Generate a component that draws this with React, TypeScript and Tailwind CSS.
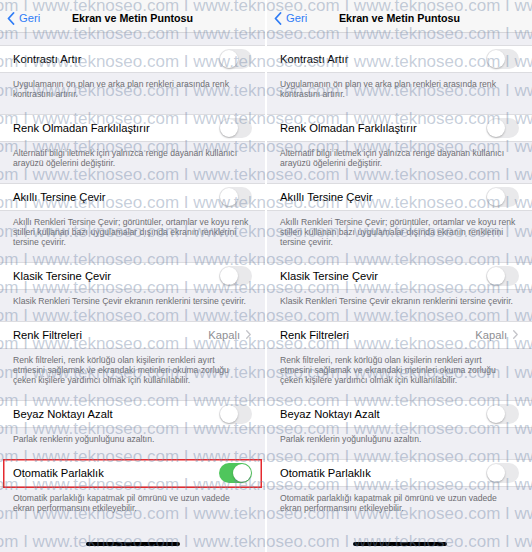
import React from "react";

type Item = {
    label: string;
    lines: string[];
    value?: string;
};

const items: Item[] = [
    {
        label: "Kontrastı Artır",
        lines: [
            "Uygulamanın ön plan ve arka plan renkleri arasında renk",
            "kontrastını artırır.",
        ],
    },
    {
        label: "Renk Olmadan Farklılaştırır",
        lines: [
            "Alternatif bilgi iletmek için yalnızca renge dayanan kullanıcı",
            "arayüzü öğelerini değiştirir.",
        ],
    },
    {
        label: "Akıllı Tersine Çevir",
        lines: [
            "Akıllı Renkleri Tersine Çevir; görüntüler, ortamlar ve koyu renk",
            "stilleri kullanan bazı uygulamalar dışında ekranın renklerini",
            "tersine çevirir.",
        ],
    },
    {
        label: "Klasik Tersine Çevir",
        lines: ["Klasik Renkleri Tersine Çevir ekranın renklerini tersine çevirir."],
    },
    {
        label: "Renk Filtreleri",
        value: "Kapalı",
        lines: [
            "Renk filtreleri, renk körlüğü olan kişilerin renkleri ayırt",
            "etmesini sağlamak ve ekrandaki metinleri okuma zorluğu",
            "çeken kişilere yardımcı olmak için kullanılabilir.",
        ],
    },
    {
        label: "Beyaz Noktayı Azalt",
        lines: ["Parlak renklerin yoğunluğunu azaltın."],
    },
    {
        label: "Otomatik Parlaklık",
        lines: [
            "Otomatik parlaklığı kapatmak pil ömrünü ve uzun vadede",
            "ekran performansını etkileyebilir.",
        ],
    },
];

const Toggle = ({ on }: { on?: boolean }) => (
    <div
        className={`flex items-center w-[33px] h-[20px] rounded-full p-[1px] ${
            on ? "bg-[#4fc65c] justify-end" : "bg-[#e9e9eb] justify-start"
        }`}
    >
        <div className="w-[18px] h-[18px] rounded-full bg-white shadow-[0_1px_2px_rgba(0,0,0,0.25)]" />
    </div>
);

const Panel = ({ autoOn }: { autoOn: boolean }) => (
    <div className="flex flex-col w-[265px] h-full bg-[#efeff4] overflow-hidden">
        <div className="relative flex items-center justify-center h-[33px] pt-[5px] bg-[#f7f7f7] border-b border-[#d6d6da] shrink-0">
            <div className="absolute left-[7px] top-[12px] flex items-center gap-[4px] text-[#2f7cf6]">
                <svg width="8" height="13" viewBox="0 0 8 13" fill="none">
                    <path
                        d="M6.5 1L1.5 6.5L6.5 12"
                        stroke="#2f7cf6"
                        strokeWidth="1.8"
                        strokeLinecap="round"
                        strokeLinejoin="round"
                    />
                </svg>
                <span className="text-[11.2px] leading-none">Geri</span>
            </div>
            <span className="text-[10.7px] font-bold text-black leading-none">
                Ekran ve Metin Puntosu
            </span>
        </div>

        <div className="mt-[12px] flex flex-col">
            {items.map((item, i) => {
                const on = i === items.length - 1 && autoOn;
                return (
                    <div key={item.label}>
                        <div className="relative flex items-center justify-between h-[28px] px-[13px] bg-white border-y border-[#dcdce0]">
                            <span className="text-[11.2px] text-black">{item.label}</span>
                            {item.value ? (
                                <div className="flex items-center gap-[6px] pr-[1px]">
                                    <span className="text-[11.2px] text-[#8e8e93]">
                                        {item.value}
                                    </span>
                                    <svg width="5" height="9" viewBox="0 0 5 9" fill="none">
                                        <path
                                            d="M0.7 0.7L4.2 4.5L0.7 8.3"
                                            stroke="#c4c4c9"
                                            strokeWidth="1.3"
                                            strokeLinecap="round"
                                            strokeLinejoin="round"
                                        />
                                    </svg>
                                </div>
                            ) : (
                                <Toggle on={on} />
                            )}
                            {/* red frame marking the switched-on row */}
                            {on && (
                                <div className="absolute left-[3px] right-[3px] top-[-1px] bottom-[-2px] shadow-[inset_0_0_0_1.5px_#e52a2f]" />
                            )}
                        </div>
                        <p className="px-[13px] pt-[6px] pb-[15px] text-[8.6px] leading-[10px] text-[#6d6d72] whitespace-nowrap">
                            {item.lines.map((line, j) => (
                                <span key={j} className="block">
                                    {line}
                                </span>
                            ))}
                        </p>
                    </div>
                );
            })}
        </div>

        <div className="flex justify-center mt-[14px]">
            <div className="w-[94px] h-[4px] rounded-full bg-black" />
        </div>
    </div>
);

const Watermark = () => (
    <div className="absolute inset-0 overflow-hidden pointer-events-none">
        <div className="flex flex-col mt-[-8px] ml-[-128px]">
            {Array.from({ length: 20 }).map((_, i) => (
                <div
                    key={i}
                    className="whitespace-pre text-[17px] leading-[28.2px] text-[rgba(118,138,168,0.42)]"
                >
                    {"www.teknoseo.com I ".repeat(5)}
                </div>
            ))}
        </div>
    </div>
);

export default function App() {
    return (
        <div className="relative flex w-[532px] h-[552px] gap-[2px] bg-white font-['Liberation_Sans',Arial,sans-serif] overflow-hidden">
            <Panel autoOn={true} />
            <Panel autoOn={false} />
            <Watermark />
        </div>
    );
}
